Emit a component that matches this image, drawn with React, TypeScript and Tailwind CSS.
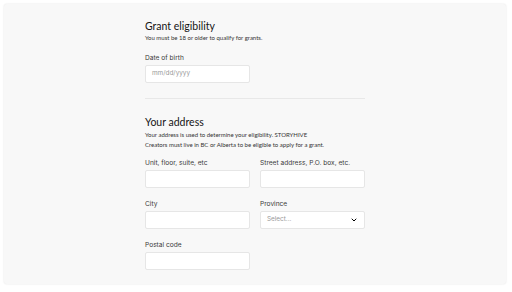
import { ChevronDown } from 'lucide-react';

const heading = 'text-[10.5px] leading-[14px] text-[#151515] font-["Lato",sans-serif]';
const note = 'text-[6px] leading-[10px] text-[#333] font-["Lato",sans-serif]';
const label = 'block text-[6.6px] leading-[9px] text-[#3a3a3a] font-["Inter",sans-serif]';
const box = 'h-[18px] w-full rounded-[2px] border border-[#e6e6e6] bg-white px-[6px] text-[6.4px] text-[#999] font-["Inter",sans-serif] flex items-center';

function Field({ name, children }: { name: string; children?: React.ReactNode }) {
  return (
    <div>
      <span className={label}>{name}</span>
      <div className={`mt-[2px] ${box}`}>{children}</div>
    </div>
  );
}

export default function App() {
  return (
    <div className="h-[292px] w-[512px] bg-white pt-[4px] pl-[4px]">
      <div className="h-[280px] w-[502px] rounded-[3px] bg-[#f8f8f8] shadow-[0_0_2px_rgba(0,0,0,0.12)]">
        <div className="mx-auto w-[220px] pt-[15px]">
          <h2 className={heading}>Grant eligibility</h2>
          <p className={note}>You must be 18 or older to qualify for grants.</p>
          <div className="mt-[11px] w-[105px]">
            <Field name="Date of birth">mm/dd/yyyy</Field>
          </div>
          <div className="mt-[15px] h-px bg-[#e8e8e8]" />

          <h2 className={`mt-[16px] ${heading}`}>Your address</h2>
          <p className={`mt-[1px] ${note}`}>
            Your address is used to determine your eligibility. STORYHIVE
            <br />
            Creators must live in BC or Alberta to be eligible to apply for a grant.
          </p>
          <div className="mt-[9px] grid grid-cols-2 gap-x-[10px] gap-y-[12px]">
            <Field name="Unit, floor, suite, etc" />
            <Field name="Street address, P.O. box, etc." />
            <Field name="City" />
            <Field name="Province">
              <span className="flex-1">Select...</span>
              <ChevronDown size={8} strokeWidth={3} className="text-black" />
            </Field>
            <Field name="Postal code" />
          </div>
        </div>
      </div>
    </div>
  );
}
